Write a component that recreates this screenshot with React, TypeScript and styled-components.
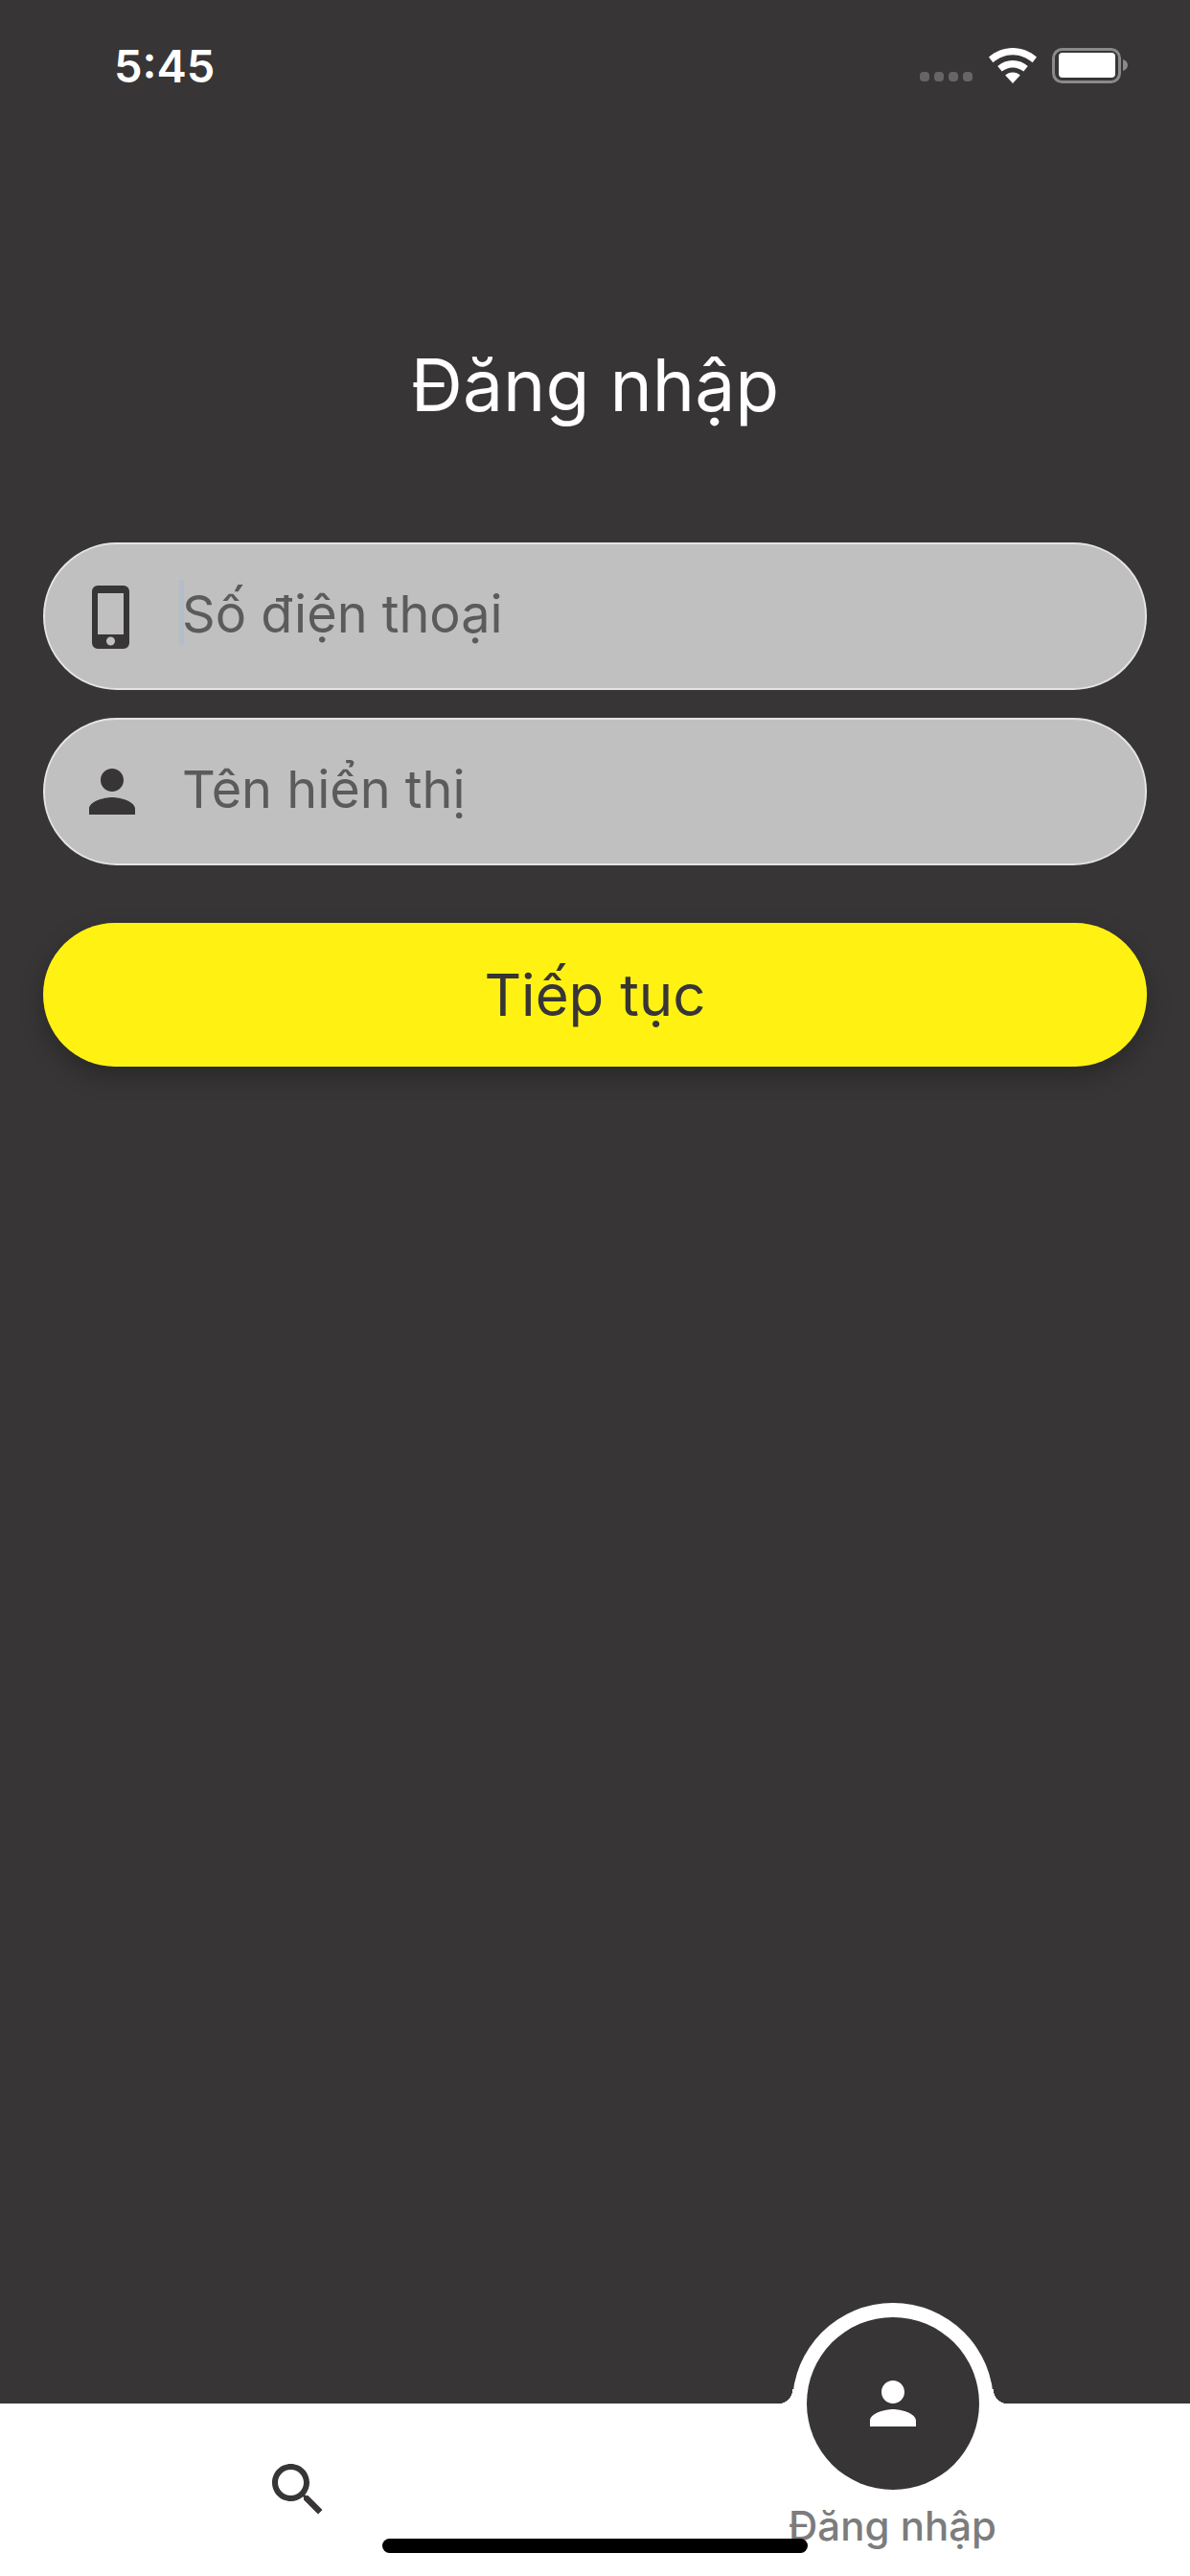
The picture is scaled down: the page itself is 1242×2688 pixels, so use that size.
import styled, { createGlobalStyle } from "styled-components";

const ink = "#373536";

const GlobalStyle = createGlobalStyle`
  html, body {
    margin: 0;
    padding: 0;
    background: ${ink};
  }
  * {
    box-sizing: border-box;
  }
`;

const Screen = styled.div`
  position: relative;
  display: flex;
  flex-direction: column;
  width: 1242px;
  height: 2688px;
  overflow: hidden;
  background: ${ink};
  font-family: Inter, "Noto Sans", sans-serif;
`;

const StatusBar = styled.div`
  display: flex;
  align-items: center;
  height: 136px;
  padding: 0 65px 0 119px;
`;

const Clock = styled.span`
  flex: 1;
  font-size: 47px;
  font-weight: 600;
  color: #fff;
`;

const StatusIcons = styled.div`
  display: flex;
  align-items: center;
  gap: 16px;
`;

const Signal = styled.div`
  display: flex;
  gap: 5px;
  align-self: flex-end;
  margin-right: 1px;
  padding-bottom: 2px;
`;

const SignalDot = styled.i`
  display: block;
  width: 10px;
  height: 10px;
  border-radius: 4px;
  background: #666;
`;

const Title = styled.h1`
  margin: 0;
  height: 430px;
  padding-top: 222px;
  font-size: 75px;
  line-height: 88px;
  font-weight: 400;
  color: #fff;
  text-align: center;
`;

const Form = styled.div`
  display: flex;
  flex-direction: column;
  gap: 29px;
  padding: 0 45px;
`;

const Field = styled.div`
  display: flex;
  align-items: center;
  height: 154px;
  padding-left: 34px;
  border: 2px solid #e4e4e4;
  border-radius: 77px;
  background: #c0c0c0;
`;

const FieldIcon = styled.svg`
  flex: none;
  width: 72px;
  height: 72px;
  fill: ${ink};
`;

const FieldText = styled.span`
  position: relative;
  top: -2px;
  margin-left: 37px;
  font-size: 54px;
  line-height: 68px;
  color: #5b5b5b;
`;

const Caret = styled.i`
  position: absolute;
  left: -3px;
  top: -2px;
  width: 5px;
  height: 68px;
  border-radius: 2px;
  background: #b2bccb;
`;

const ContinueButton = styled.button`
  display: block;
  height: 150px;
  margin: 60px 45px 0;
  border: 0;
  border-radius: 75px;
  background: #fff212;
  box-shadow: 0 10px 24px rgba(0, 0, 0, 0.25);
  font-family: inherit;
  font-size: 60px;
  color: ${ink};
`;

const Spacer = styled.div`
  flex: 1;
`;

const TabBar = styled.nav`
  position: relative;
  display: grid;
  grid-template-columns: 1fr 1fr;
  height: 180px;
  background: #fff;
`;

const Tab = styled.div`
  position: relative;
  display: flex;
  align-items: flex-start;
  justify-content: center;
`;

const SearchIcon = styled.svg`
  width: 72px;
  height: 72px;
  margin-top: 54px;
  fill: ${ink};
`;

const Hump = styled.div`
  position: absolute;
  left: 50%;
  top: -105px;
  width: 210px;
  height: 210px;
  margin-left: -105px;
  display: flex;
  align-items: center;
  justify-content: center;
  border-radius: 50%;
  background: #fff;

  &::before,
  &::after {
    content: "";
    position: absolute;
    top: 90px;
    width: 16px;
    height: 15px;
  }
  &::before {
    left: -15px;
    background: radial-gradient(circle at 0 0, transparent 15px, #fff 15.5px);
  }
  &::after {
    right: -15px;
    background: radial-gradient(circle at 100% 0, transparent 15px, #fff 15.5px);
  }
`;

const HumpButton = styled.div`
  display: flex;
  align-items: center;
  justify-content: center;
  width: 180px;
  height: 180px;
  border-radius: 50%;
  background: ${ink};
`;

const HumpIcon = styled.svg`
  width: 72px;
  height: 72px;
  fill: #fff;
`;

const TabLabel = styled.span`
  position: absolute;
  left: 0;
  right: 0;
  top: 102px;
  font-size: 42px;
  line-height: 52px;
  font-weight: 500;
  color: #7c7c7c;
  text-align: center;
`;

const HomeIndicator = styled.div`
  position: absolute;
  left: 399px;
  top: 2649px;
  width: 444px;
  height: 15px;
  border-radius: 8px;
  background: #000;
`;

const personPath =
  "M12 12c2.21 0 4-1.79 4-4s-1.79-4-4-4-4 1.790-4 4 1.790 4 4 4zm0 2c-2.670 0-8 1.340-8 4v2h16v-2c0-2.660-5.330-4-8-4z";

const App = () => {
  return (
    <Screen>
      <GlobalStyle />
      <StatusBar>
        <Clock>5:45</Clock>
        <StatusIcons>
          <Signal>
            <SignalDot />
            <SignalDot />
            <SignalDot />
            <SignalDot />
          </Signal>
          <svg width="50" height="37" viewBox="0 0 50 37" fill="#fff">
            <path d="M25 0C15.500 0 6.800 3.600 0 9.600l4.400 5.600C10.200 10.200 17.300 7.200 25 7.200s14.800 3 20.600 8L50 9.600C43.200 3.600 34.500 0 25 0z" />
            <path d="M25 13c-6 0-11.400 2.200-15.800 6l4.500 5.600c3-2.600 7-4.200 11.300-4.200s8.300 1.600 11.300 4.200l4.500-5.600C36.400 15.200 31 13 25 13z" />
            <path d="M25 25.500c-3 0-5.700 1.100-7.800 3L25 37l7.800-8.500c-2.100-1.900-4.800-3-7.800-3z" />
          </svg>
          <svg width="79" height="37" viewBox="0 0 79 37">
            <rect x="1.500" y="1.500" width="69" height="34" rx="9" fill="none" stroke="#8a8a8a" strokeWidth="3" />
            <rect x="7" y="5" width="59" height="26" rx="4" fill="#fff" />
            <path d="M74 12c3 1 5 3 5 6s-2 5-5 6z" fill="#8a8a8a" />
          </svg>
        </StatusIcons>
      </StatusBar>

      <Title>Đăng nhập</Title>

      <Form>
        <Field>
          <FieldIcon viewBox="0 0 72 72">
            <path
              fillRule="evenodd"
              d="M21 4h27a6 6 0 0 1 6 6v54a6 6 0 0 1-6 6H21a6 6 0 0 1-6-6V10a6 6 0 0 1 6-6zm0 8v43h27V12zm13.500 45.500a4.500 4.500 0 1 0 0 9 4.500 4.500 0 0 0 0-9z"
            />
          </FieldIcon>
          <FieldText>
            <Caret />
            Số điện thoại
          </FieldText>
        </Field>
        <Field>
          <FieldIcon viewBox="0 0 24 24">
            <path d={personPath} />
          </FieldIcon>
          <FieldText>Tên hiển thị</FieldText>
        </Field>
      </Form>

      <ContinueButton>Tiếp tục</ContinueButton>

      <Spacer />

      <TabBar>
        <Tab>
          <SearchIcon viewBox="0 0 24 24">
            <path d="M15.500 14h-.79l-.28-.27C15.410 12.590 16 11.110 16 9.500 16 5.910 13.090 3 9.500 3S3 5.910 3 9.500 5.910 16 9.500 16c1.610 0 3.090-.59 4.230-1.570l.27.28v.79l5 4.990L20.490 19l-4.990-5zm-6 0C7.010 14 5 11.990 5 9.500S7.010 5 9.500 5 14 7.010 14 9.500 11.990 14 9.500 14z" />
          </SearchIcon>
        </Tab>
        <Tab>
          <Hump>
            <HumpButton>
              <HumpIcon viewBox="0 0 24 24">
                <path d={personPath} />
              </HumpIcon>
            </HumpButton>
          </Hump>
          <TabLabel>Đăng nhập</TabLabel>
        </Tab>
      </TabBar>

      <HomeIndicator />
    </Screen>
  );
};

export default App;
